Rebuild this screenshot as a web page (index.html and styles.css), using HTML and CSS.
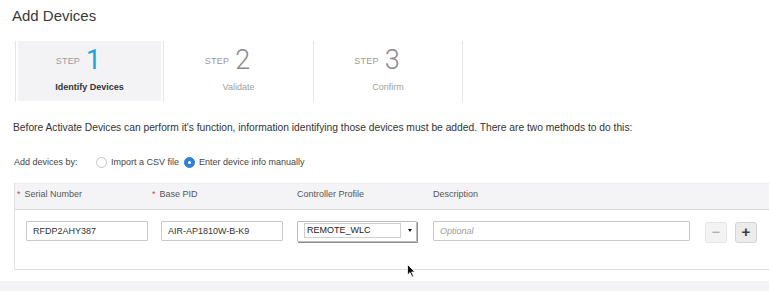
FILE: index.html
```html
<html>
<head>
    <meta charset="UTF-8" />
    <link rel="stylesheet" href="styles.css">
</head>
<body>
  <div class="page">
      <h1 class="title">Add Devices</h1>

      <div class="steps">
          <div class="step active">
              <div class="step-inner">
                  <div class="step-num"><span class="step-word">STEP</span><span class="digit">1</span></div>
                  <div class="step-name">Identify Devices</div>
              </div>
          </div>
          <div class="step">
              <div class="step-inner">
                  <div class="step-num"><span class="step-word">STEP</span><span class="digit">2</span></div>
                  <div class="step-name">Validate</div>
              </div>
          </div>
          <div class="step last">
              <div class="step-inner">
                  <div class="step-num"><span class="step-word">STEP</span><span class="digit">3</span></div>
                  <div class="step-name">Confirm</div>
              </div>
          </div>
      </div>

      <p class="intro">Before Activate Devices can perform it's function, information identifying those devices must be added. There are two methods to do this:</p>

      <div class="method">
          <span class="method-label">Add devices by:</span>
          <span class="radio"></span><span class="radio-text">Import a CSV file</span>
          <span class="radio checked"></span><span class="radio-text">Enter device info manually</span>
      </div>

      <div class="devices">
          <div class="row head">
              <div class="cell"><span class="req">*</span>Serial Number</div>
              <div class="cell"><span class="req">*</span>Base PID</div>
              <div class="cell">Controller Profile</div>
              <div class="cell">Description</div>
          </div>
          <div class="row body">
              <div class="cell"><div class="field w121">RFDP2AHY387</div></div>
              <div class="cell"><div class="field w121">AIR-AP1810W-B-K9</div></div>
              <div class="cell">
                  <div class="select">
                      <div class="select-value">REMOTE_WLC</div>
                      <div class="select-arrow"></div>
                  </div>
              </div>
              <div class="cell"><div class="field w256 placeholder">Optional</div></div>
              <div class="cell"><div class="btn minus">&minus;</div></div>
              <div class="cell"><div class="btn plus">+</div></div>
          </div>
      </div>
  </div>
  <div class="footer-band"></div>

  <svg class="cursor" width="9" height="14" viewBox="0 0 9 14">
      <path d="M0.5 0.5 L0.5 11 L3 8.6 L5 13 L6.6 12.3 L4.7 8 L8 8 Z" fill="#111" stroke="#fff" stroke-width="0.8"/>
  </svg>
</body>
</html>
```

FILE: styles.css
```css
body {
    margin: 0;
    font-family: "Liberation Sans", Arial, sans-serif;
    color: #333;
    background: #fff;
    position: relative;
    overflow: hidden;
}

.page {
    padding-left: 12px;
}

.title {
    margin: 0;
    padding-top: 6px;
    font-size: 15px;
    line-height: 20px;
    font-weight: normal;
    color: #3a3a3a;
}

/* steps */

.steps {
    display: flex;
    margin-top: 15px;
    margin-left: 3px;
    height: 61px;
}

.step {
    width: 148px;
    border-left: 1px solid #e6e6e6;
    padding: 0 2px;
    box-sizing: border-box;
}

.step + .step {
    width: 150px;
}

.step.last {
    border-right: 1px solid #e6e6e6;
}

.step-inner {
    height: 60px;
    text-align: center;
}

.step.active .step-inner {
    background: #f3f3f5;
}

.step-num {
    display: flex;
    justify-content: center;
    align-items: center;
    padding-right: 22px;
    padding-top: 7px;
    height: 24px;
}

.step-word {
    font-size: 9px;
    color: #9a9a9a;
    letter-spacing: 0.2px;
    margin-right: 6px;
    padding-top: 2px;
}

.digit {
    font-family: Roboto, sans-serif;
    font-weight: 300;
    font-size: 27px;
    line-height: 24px;
    color: #8a8a8a;
}

.step.active .digit {
    color: #1ea3d8;
    font-weight: 400;
}

.step-name {
    margin-top: 10px;
    font-size: 9px;
    color: #a0a0a0;
}

.step.active .step-name {
    font-weight: bold;
    color: #333;
}

/* text */

.intro {
    margin: 19px 0 0 1px;
    font-size: 10.25px;
    line-height: 14px;
    color: #333;
}

.method {
    display: flex;
    align-items: center;
    margin: 20px 0 0 2px;
    height: 14px;
    font-size: 9px;
    color: #444;
}

.method-label {
    width: 82px;
}

.radio {
    width: 9px;
    height: 9px;
    border: 1px solid #c4c4c4;
    border-radius: 50%;
    background: #fff;
    margin-right: 4px;
}

.radio.checked {
    border-color: #2f80d8;
    background: #2f80d8;
    position: relative;
}

.radio.checked:after {
    content: '';
    position: absolute;
    width: 3px;
    height: 3px;
    border-radius: 50%;
    background: #fff;
    left: 3px;
    top: 3px;
}

.radio-text {
    margin-right: 5px;
}

/* table */

.devices {
    margin-top: 14px;
    margin-left: 2px;
    border-left: 1px solid #e2e2e2;
}

.row {
    display: grid;
    grid-template-columns: 135px 136px 136px 272px 30px 22px;
    padding-left: 11px;
}

.row.head {
    height: 25px;
    line-height: 20px;
    background: #f4f4f6;
    border-top: 1px solid #ececec;
    border-bottom: 1px solid #dadada;
    font-size: 9px;
    color: #555;
}

.req {
    color: #d0413e;
    margin-left: -9px;
    margin-right: 4px;
}

.row.body {
    height: 48px;
    padding-top: 11px;
    border-bottom: 1px solid #dedede;
}

.field {
    height: 18px;
    line-height: 18px;
    border: 1px solid #c9c9c9;
    border-radius: 1px;
    padding-left: 6px;
    font-size: 9px;
    color: #333;
    box-sizing: content-box;
}

.w121 {
    width: 114px;
}

.w256 {
    width: 249px;
}

.placeholder {
    font-style: italic;
    color: #9b9b9b;
}

.select {
    width: 118px;
    height: 18px;
    border: 1px solid #bdbdbd;
    border-radius: 1px;
    box-shadow: 1px 1px 0 #8d8d8d;
    display: flex;
    align-items: flex-start;
    padding-top: 1px;
}

.select-value {
    margin-left: 6px;
    width: 93px;
    height: 13px;
    line-height: 13px;
    border: 1px solid #cfcfcf;
    padding-left: 2px;
    font-size: 9px;
    color: #222;
}

.select-arrow {
    margin: 6px 0 0 7px;
    width: 0;
    height: 0;
    border-left: 2px solid transparent;
    border-right: 2px solid transparent;
    border-top: 3px solid #111;
}

.btn {
    width: 20px;
    height: 19px;
    line-height: 18px;
    text-align: center;
    border: 1px solid #e4e4e4;
    border-radius: 3px;
    background: #f3f3f3;
    font-size: 15px;
    margin-top: 1px;
}

.btn.minus {
    color: #a5a5a5;
}

.btn.plus {
    border-color: #d4d4d4;
    background: #ebebeb;
    color: #3b3b3b;
    font-weight: bold;
}

.footer-band {
    margin-top: 11px;
    height: 20px;
    background: #f4f4f6;
}

.cursor {
    position: absolute;
    left: 407px;
    top: 264px;
}
```
